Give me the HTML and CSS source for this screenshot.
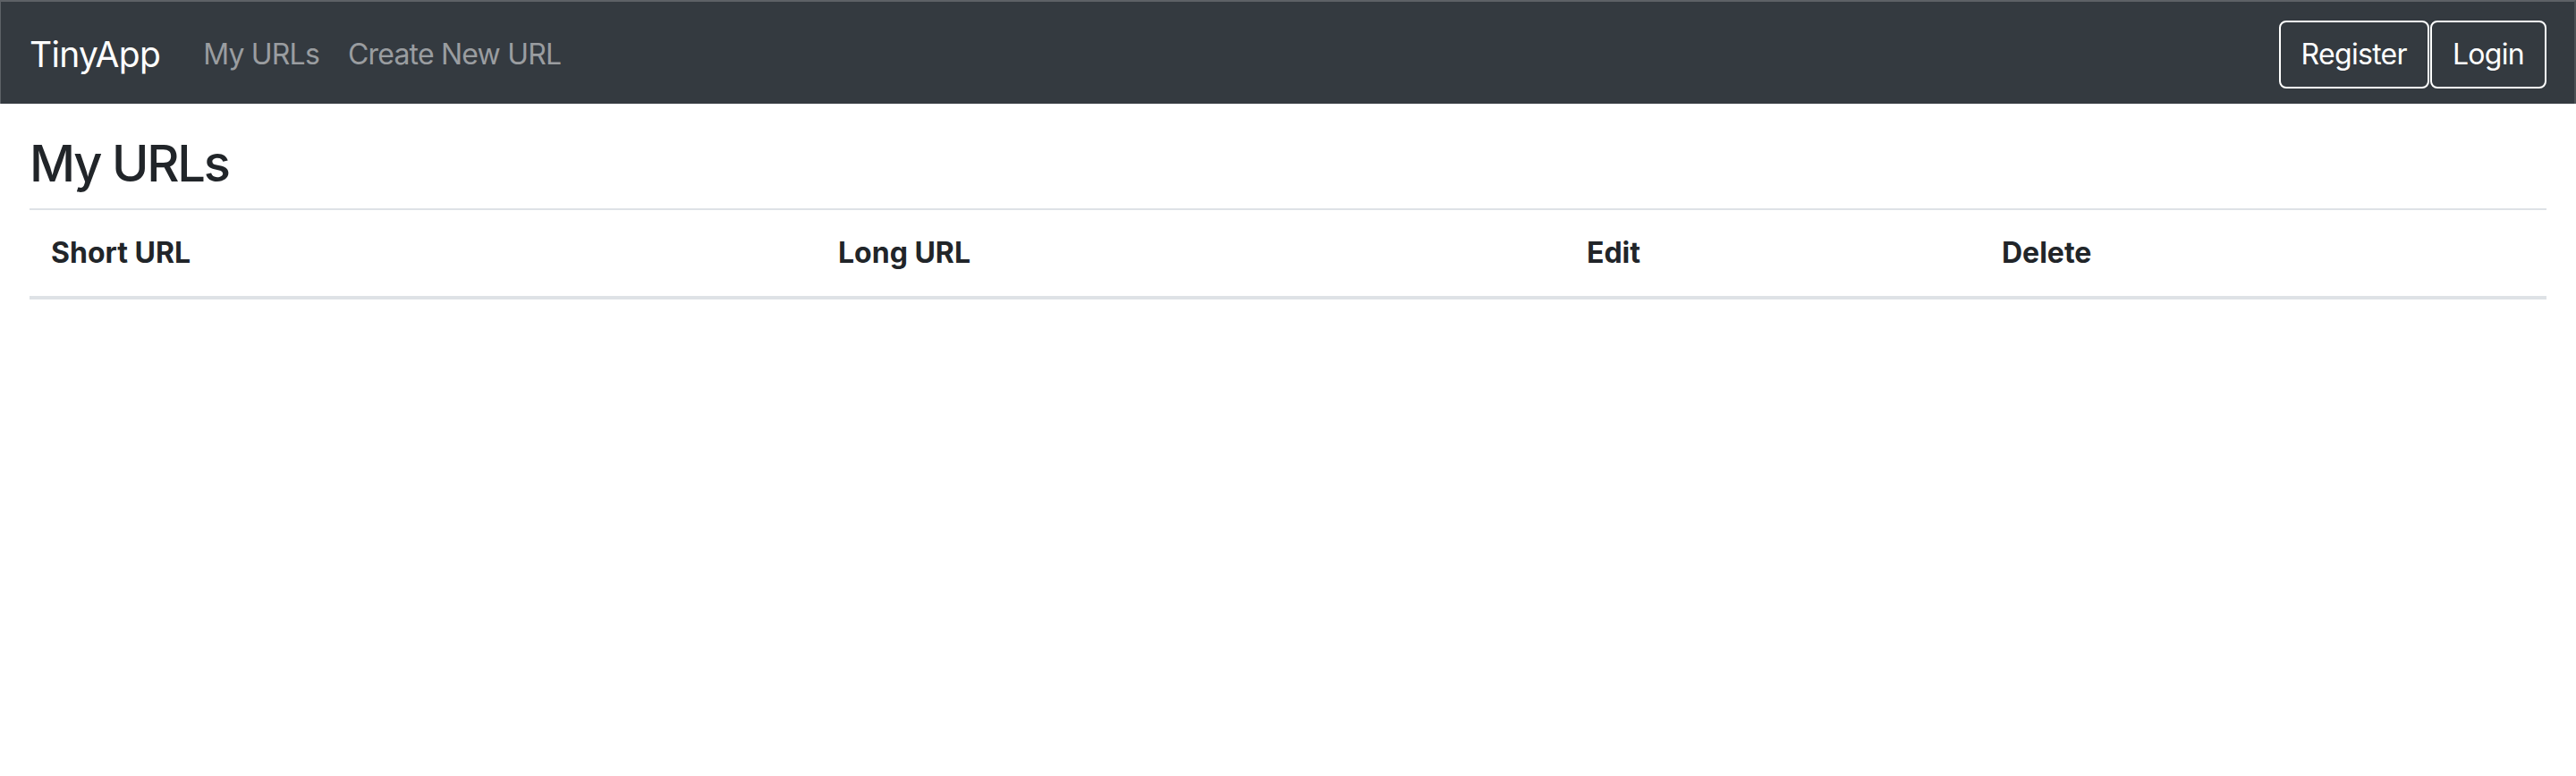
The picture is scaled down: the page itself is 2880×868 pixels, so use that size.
FILE: index.html
```html
<!DOCTYPE html>
<html lang="en">
<head>
<meta charset="utf-8">
<title>TinyApp</title>
<link rel="stylesheet" href="styles.css">
</head>
<body>
<nav class="navbar">
  <a class="brand" href="#">TinyApp</a>
  <ul class="nav-links">
    <li><a href="#">My URLs</a></li>
    <li><a href="#">Create New URL</a></li>
  </ul>
  <div class="auth">
    <button class="btn">Register</button><button class="btn">Login</button>
  </div>
</nav>
<main class="container">
  <h3 class="title">My URLs</h3>
  <table class="table">
    <colgroup>
      <col class="c1"><col class="c2"><col class="c3"><col class="c4">
    </colgroup>
    <thead>
      <tr>
        <th>Short URL</th>
        <th>Long URL</th>
        <th>Edit</th>
        <th>Delete</th>
      </tr>
    </thead>
    <tbody></tbody>
  </table>
</main>
</body>
</html>
```
FILE: styles.css
```css
* { box-sizing: border-box; }
html, body {
  margin: 0;
  padding: 0;
  background: #ffffff;
}
body {
  font-family: Inter, "Noto Sans", "Liberation Sans", sans-serif;
  color: #212529;
  font-size: 32px;
  line-height: 1.5;
}
.navbar {
  display: flex;
  align-items: center;
  height: 116px;
  background: #343a40;
  border-top: 2px solid #5d6166;
  border-left: 1px solid #5d6166;
  border-right: 2px solid #4b5055;
  padding: 3px 31px 0 32px;
}
.brand {
  color: #ffffff;
  text-decoration: none;
  font-size: 39px;
  line-height: 60px;
  margin-right: 32px;
  letter-spacing: -0.7px;
}
.nav-links {
  display: flex;
  list-style: none;
  margin: 0;
  padding: 0;
  flex: 1;
}
.nav-links a {
  display: block;
  padding: 0 16px;
  color: #9a9da0;
  text-decoration: none;
  font-size: 32px;
  line-height: 48px;
  letter-spacing: -0.8px;
}
.auth {
  display: flex;
  gap: 1px;
}
.btn {
  font-family: inherit;
  font-size: 32px;
  line-height: 48px;
  color: #ffffff;
  background: transparent;
  border: 2px solid #ffffff;
  border-radius: 8px;
  padding: 12px 23px;
  letter-spacing: -0.7px;
}
.container {
  padding: 0 33px 0 33px;
}
.title {
  margin: 34px 0 16px;
  font-size: 56px;
  font-weight: 500;
  line-height: 1.2;
  letter-spacing: -2.2px;
}
.table {
  width: 100%;
  border-collapse: collapse;
  table-layout: fixed;
}
.c1 { width: 880px; }
.c2 { width: 837px; }
.c3 { width: 464px; }
.c4 { width: 633px; }
.table th {
  text-align: left;
  font-weight: 700;
  padding: 24px;
  line-height: 48px;
  border-top: 2px solid #dee2e6;
  border-bottom: 4px solid #dee2e6;
  letter-spacing: 0px;
}
```
